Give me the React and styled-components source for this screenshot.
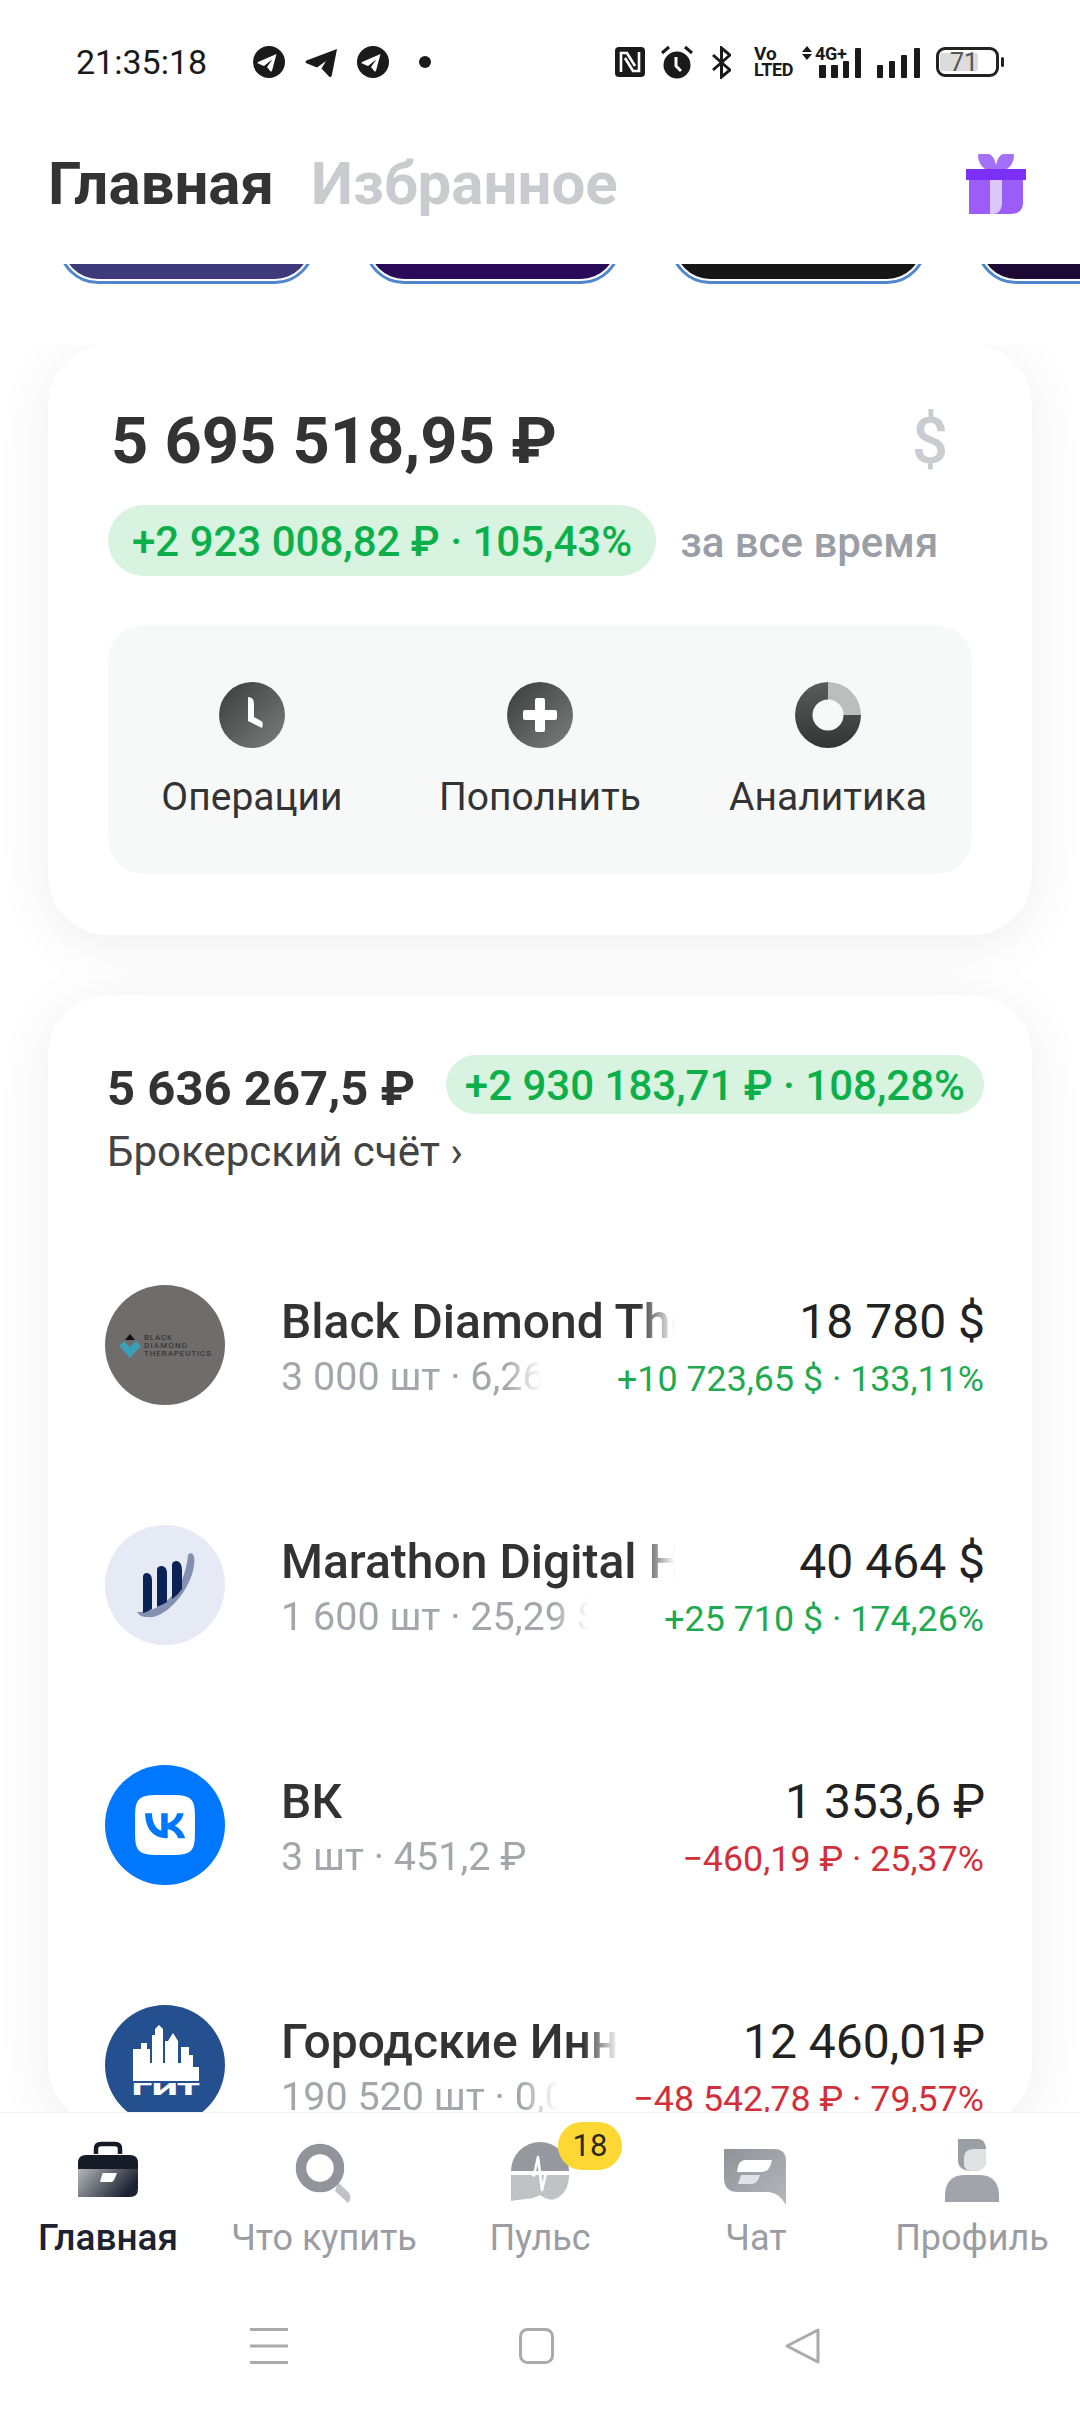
import React from 'react';
import styled, { createGlobalStyle } from 'styled-components';
import { SiVk } from 'react-icons/si';

const Global = createGlobalStyle`
  html, body { margin: 0; padding: 0; background: #fff; }
  body { font-family: Roboto, "Liberation Sans", sans-serif; color: #333; }
  * { box-sizing: border-box; }
`;

const Screen = styled.div`
  width: 1080px;
  height: 2412px;
  display: flex;
  flex-direction: column;
  overflow: hidden;
  background: #fff;
`;

const StatusBar = styled.div`
  height: 124px;
  flex: none;
  display: flex;
  align-items: center;
  padding: 0 77px 0 76px;
  color: #1a1a1a;
`;
const Time = styled.div`
  font-size: 34px;
  width: 130px;
  margin-right: 47px;
  white-space: nowrap;
`;
const NotifIcons = styled.div`
  display: flex;
  align-items: center;
  gap: 20px;
`;
const NotifDot = styled.div`
  width: 12px;
  height: 12px;
  margin-left: 10px;
  border-radius: 50%;
  background: #1a1a1a;
`;
const SysIcons = styled.div`
  margin-left: auto;
  display: flex;
  align-items: center;
  gap: 16px;
`;
const Volte = styled.div`
  width: 39px;
  padding-left: 7px;
  font-weight: 700;
  color: #1a1a1a;
  white-space: nowrap;
`;
const VolteTop = styled.div`
  font-size: 19px;
  line-height: 16px;
`;
const VolteBottom = styled.div`
  font-size: 18px;
  line-height: 16px;
  letter-spacing: -0.4px;
`;
const Net = styled.div`
  position: relative;
  width: 59px;
  height: 32px;
  display: flex;
`;
const NetLabel = styled.div`
  position: absolute;
  left: 13px;
  top: -1px;
  font-size: 18px;
  line-height: 17px;
  font-weight: 700;
  color: #1a1a1a;
  letter-spacing: -0.3px;
  white-space: nowrap;
`;
const Battery = styled.div`
  width: 63px;
  height: 30px;
  border: 3px solid #222;
  border-radius: 9px;
  position: relative;
  padding: 3px 18px 3px 1px;
  margin-right: 4px;
  &::after {
    content: '';
    position: absolute;
    right: -8px;
    top: 7px;
    width: 3px;
    height: 10px;
    background: #222;
    border-radius: 2px;
  }
`;
const BatteryFill = styled.div`
  height: 100%;
  background: #dcdcdc;
  font-size: 25px;
  line-height: 20px;
  color: #555;
  text-align: right;
  border-radius: 2px;
`;

const Header = styled.div`
  height: 140px;
  flex: none;
  padding: 0 54px 21px 48px;
  display: flex;
  align-items: center;
`;
const Tab = styled.div`
  font-size: 60px;
  font-weight: 700;
  margin-right: 37px;
  color: ${p => (p.$active ? '#333' : '#c9cbce')};
`;
const GiftWrap = styled.div`
  margin-left: auto;
  display: flex;
`;

const Strip = styled.div`
  height: 20px;
  flex: none;
  margin-bottom: 61px;
  padding-left: 58px;
  display: flex;
  align-items: flex-end;
  gap: 49px;
  overflow: hidden;
`;
const Promo = styled.div`
  width: 257px;
  height: 90px;
  flex: none;
  border: 3px solid #4f86cd;
  padding: 2px;
  border-radius: 40px;
  background: ${p => p.$color};
  background-clip: content-box;
`;

const Content = styled.div`
  flex: 1;
  min-height: 0;
  overflow: hidden;
  display: flex;
  flex-direction: column;
  gap: 60px;
  padding: 0 48px;
`;
const Card = styled.div`
  flex: none;
  background: #fff;
  border-radius: 60px;
  box-shadow: 0 8px 60px rgba(0, 0, 0, 0.07);
`;
const SummaryCard = styled(Card)`
  padding: 56px 60px 61px;
`;
const TotalRow = styled.div`
  display: flex;
  justify-content: space-between;
  align-items: center;
  height: 80px;
`;
const Total = styled.div`
  font-size: 65px;
  line-height: 80px;
  font-weight: 700;
  padding-left: 3px;
  color: #333;
`;
const CurrencySwitch = styled.div`
  font-size: 64px;
  font-weight: 500;
  color: #c9ccd0;
  margin-right: 24px;
`;
const ProfitRow = styled.div`
  margin-top: 24px;
  display: flex;
  align-items: center;
`;
const Pill = styled.div`
  background: #d8f3e0;
  color: #0cb04a;
  font-size: 42px;
  font-weight: 500;
  height: ${p => p.$h}px;
  line-height: ${p => p.$h + 2}px;
  padding: 0 ${p => p.$pad}px;
  border-radius: 36px;
  white-space: nowrap;
  flex: none;
`;
const Period = styled.div`
  margin: 3px 0 0 24px;
  font-size: 42px;
  font-weight: 500;
  color: #9a9ea6;
  white-space: nowrap;
`;
const Actions = styled.div`
  margin-top: 49px;
  height: 249px;
  background: #f7f9f9;
  border-radius: 36px;
  padding-top: 57px;
  display: grid;
  grid-template-columns: repeat(3, 1fr);
`;
const Action = styled.div`
  display: flex;
  flex-direction: column;
  align-items: center;
`;
const ActionLabel = styled.div`
  margin-top: 24px;
  font-size: 39px;
  line-height: 50px;
  color: #333;
  white-space: nowrap;
`;

const AccountCard = styled(Card)`
  padding: 60px 48px 0 57px;
`;
const AccountHead = styled.div`
  display: flex;
  justify-content: space-between;
  align-items: flex-start;
`;
// the account name runs on under the pill, so this column stays narrower than its text
const AccountInfo = styled.div`
  flex: 0 0 330px;
  min-width: 0;
  padding-top: 4px;
  padding-left: 2px;
`;
const AccountSum = styled.div`
  font-size: 49px;
  line-height: 60px;
  font-weight: 700;
  color: #333;
  white-space: nowrap;
`;
const AccountName = styled.div`
  margin-top: 8px;
  font-size: 42px;
  line-height: 50px;
  color: #444;
  white-space: nowrap;
`;
const Rows = styled.div`
  margin-top: 108px;
  display: flex;
  flex-direction: column;
  gap: 120px;
`;
const Row = styled.div`
  height: 120px;
  display: flex;
  align-items: flex-start;
`;
const Logo = styled.div`
  width: 120px;
  height: 120px;
  flex: none;
  border-radius: 50%;
  background: ${p => p.$bg};
  display: flex;
  align-items: center;
  justify-content: center;
  overflow: hidden;
  margin-right: 56px;
`;
const RowBody = styled.div`
  flex: 1;
  min-width: 0;
  padding-top: 7px;
`;
const Line = styled.div`
  display: flex;
  justify-content: space-between;
  white-space: nowrap;
`;
// left text fades out before it reaches the right column
const Fade = styled.div`
  flex: 1;
  min-width: 0;
  overflow: hidden;
  margin-right: ${p => p.$gap}px;
  -webkit-mask-image: linear-gradient(to right, #000 calc(100% - 36px), transparent);
  mask-image: linear-gradient(to right, #000 calc(100% - 36px), transparent);
`;
const Name = styled(Fade)`
  font-size: 48px;
  line-height: 60px;
  font-weight: 500;
  color: #333;
`;
const Sub = styled(Fade)`
  font-size: 39.5px;
  line-height: 50px;
  color: #a3a6ab;
`;
const Value = styled.div`
  flex: none;
  font-size: 48px;
  line-height: 60px;
  color: #222;
  margin-right: -1px;
`;
const Change = styled.div`
  flex: none;
  font-size: 35.8px;
  line-height: 54px;
  color: ${p => (p.$down ? '#d32f3a' : '#1eaa50')};
`;

const BottomNav = styled.div`
  height: 300px;
  flex: none;
  position: relative;
  background: #fff;
  border-top: 1px solid #f0f0f0;
  padding-top: 23px;
`;
const Tabs = styled.div`
  display: grid;
  grid-template-columns: repeat(5, 216px);
`;
const NavItem = styled.div`
  position: relative;
  display: flex;
  flex-direction: column;
  align-items: center;
`;
const NavIcon = styled.div`
  width: 70px;
  height: 70px;
  display: flex;
`;
const NavLabel = styled.div`
  margin-top: 10px;
  font-size: ${p => (p.$active ? 37 : 36)}px;
  line-height: 44px;
  font-weight: ${p => (p.$active ? 500 : 400)};
  color: ${p => (p.$active ? '#1b2230' : '#9a9da3')};
  white-space: nowrap;
`;
const Badge = styled.div`
  position: absolute;
  left: 126px;
  top: -14px;
  width: 64px;
  height: 48px;
  border-radius: 24px;
  background: #fdd835;
  color: #2b2a12;
  font-size: 31px;
  line-height: 48px;
  text-align: center;
`;
const Gestures = styled.div`
  margin-top: 68px;
  padding-left: 250px;
  display: flex;
  gap: 231px;
`;

const TgCircle = () => (
  <svg width="32" height="32" viewBox="0 0 32 32">
    <circle cx="16" cy="16" r="16" fill="#1a1a1a" />
    <path fill="#fff" d="M23.5 8 L5 16 Q4 16.8 5 17.4 L11 20 L19.5 13.2 L14 21 L17.6 25.4 Q18.6 25.9 19 24.8 Z" />
  </svg>
);

const TgPlane = () => (
  <svg width="32" height="32" viewBox="0 0 32 32">
    <path fill="#1a1a1a" d="M32 3 L1.5 14.5 Q-.5 16 1.5 17.2 L12 21.5 L21 15 L16.5 22.6 L24.5 31 Q26.3 31.5 26.8 29.5 Z" />
  </svg>
);

const NfcIcon = () => (
  <svg width="30" height="30" viewBox="0 0 30 30">
    <rect width="30" height="30" rx="4" fill="#1a1a1a" />
    <path d="M6 25 V6 L12 6 L20 19 M24 5 V24 L18 24 L10 11" fill="none" stroke="#fff" strokeWidth="2.6" />
  </svg>
);

const AlarmIcon = () => (
  <svg width="32" height="34" viewBox="0 0 32 34">
    <circle cx="16" cy="20" r="13.5" fill="#1a1a1a" />
    <path d="M1 8 L8 2 M31 8 L24 2" stroke="#1a1a1a" strokeWidth="3" />
    <path d="M15 12 V21 L20 26" fill="none" stroke="#fff" strokeWidth="3" />
  </svg>
);

const BtIcon = () => (
  <svg width="22" height="33" viewBox="-3 0 22 33">
    <path d="M1 9 L18 24 L9.5 31 V2 L18 9 L1 24" fill="none" stroke="#1a1a1a" strokeWidth="3" />
  </svg>
);

const NetBars = () => (
  <svg width="59" height="32" viewBox="0 0 59 32">
    <path d="M0 6 L5 0 L10 6 Z M0 8 L10 8 L5 14 Z" fill="#1a1a1a" />
    <rect x="17" y="19" width="7" height="13" rx="1" fill="#1a1a1a" />
    <rect x="29" y="19" width="7" height="13" rx="1" fill="#1a1a1a" />
    <rect x="41" y="15" width="6" height="17" rx="1" fill="#1a1a1a" />
    <rect x="53" y="2" width="6" height="30" rx="1" fill="#1a1a1a" />
  </svg>
);

const SignalIcon = () => (
  <svg width="43" height="32" viewBox="0 0 43 32">
    <rect x="0" y="19" width="6" height="13" rx="1" fill="#1a1a1a" />
    <rect x="12" y="15" width="6" height="17" rx="1" fill="#1a1a1a" />
    <rect x="24" y="9" width="6" height="23" rx="1" fill="#1a1a1a" />
    <rect x="37" y="2" width="6" height="30" rx="1" fill="#1a1a1a" />
  </svg>
);

const GiftIcon = () => (
  <svg width="60" height="62" viewBox="0 0 60 62">
    <path d="M12 2 Q12 1 13 1 H22 C27 1 29 8 30 12 C31 8 33 1 38 1 H47 Q48 1 48 2 C48 9 44 17 36 17 H24 C16 17 12 9 12 2 Z" fill="#a470f8" />
    <path d="M3 27 H57 V50 C57 57 52 61 45 61 H3 Z" fill="#9b5cf8" />
    <path d="M24 27 H36 V50 C36 56 33 60 28 61 H24 Z" fill="#dcc7fb" />
    <rect x="0" y="16" width="60" height="11" fill="#7c2ff7" />
  </svg>
);

const ClockIcon = () => (
  <svg width="66" height="66" viewBox="0 0 66 66">
    <defs>
      <linearGradient id="dark" x1="0" y1="0" x2="1" y2="1">
        <stop offset="0" stopColor="#3a3c3c" />
        <stop offset="1" stopColor="#7c7e7e" />
      </linearGradient>
    </defs>
    <circle cx="33" cy="33" r="33" fill="url(#dark)" />
    <path d="M29 15 Q35 15 35 22 V35 L43 39.5 Q44.5 42 43 46 L29 39 Z" fill="#fff" />
  </svg>
);

const PlusIcon = () => (
  <svg width="66" height="66" viewBox="0 0 66 66">
    <circle cx="33" cy="33" r="33" fill="url(#dark)" />
    <path d="M28 18 Q28 16 30 16 H36 Q38 16 38 18 V28 H48 Q50 28 50 30 V36 Q50 38 48 38 H38 V48 Q38 50 36 50 H30 Q28 50 28 48 V38 H18 Q16 38 16 36 V30 Q16 28 18 28 H28 Z" fill="#fff" />
  </svg>
);

const DonutIcon = () => (
  <svg width="66" height="66" viewBox="0 0 66 66">
    <defs>
      <linearGradient id="donut" x1="0" y1="0" x2="0" y2="1">
        <stop offset="0" stopColor="#5a5c5c" />
        <stop offset="1" stopColor="#333535" />
      </linearGradient>
    </defs>
    <path d="M33 0 A33 33 0 1 0 66 33 H33 Z" fill="url(#donut)" />
    <path d="M33 0 A33 33 0 0 1 66 33 H33 Z" fill="#bcbebe" />
    <circle cx="33" cy="33" r="15.5" fill="#f7f9f9" />
  </svg>
);

const BlackDiamondLogo = () => (
  <svg width="120" height="120" viewBox="0 0 120 120">
    <path d="M25 49 L30 55 H20 Z" fill="#111" />
    <path d="M14 61 L19 56 L25 62 L31 56 L36 61 L25 73 Z" fill="#3aa0b8" />
    <g fontFamily="Roboto" fontSize="8" fill="#2b2b2b">
      <text x="39" y="55" textLength="28">BLACK</text>
      <text x="39" y="63" textLength="43">DIAMOND</text>
      <text x="39" y="71" textLength="67">THERAPEUTICS</text>
    </g>
  </svg>
);

const MarathonLogo = () => (
  <svg width="120" height="120" viewBox="0 0 120 120">
    <path d="M32 87 C56 88 80 66 83 30 C86 26 91 28 89 41 C85 66 60 95 42 92 C37 92 34 90 32 87 Z" fill="#8390b0" />
    <path d="M38 52 Q38 48 42 48 Q47 49 47 55 V84 Q42 87 38 88 Z" fill="#0b2257" />
    <path d="M52 45 Q52 41 57 41 Q62 42 62 48 V77 Q57 80 52 82 Z" fill="#0b2257" />
    <path d="M67 40 Q67 36 72 36 Q77 37 77 46 V64 Q73 70 67 74 Z" fill="#0b2257" />
  </svg>
);

const GitLogo = () => (
  <svg width="120" height="120" viewBox="0 0 120 120">
    <path fill="#fff" d="M28 76 V44 H36 V38 H42 V44 H45 V58 H47 V30 H50 V24 L54 20 L58 24 V58 H60 V36 H63 L68 28 L73 36 V58 H76 V42 H84 V50 H88 V62 H94 V76 Z" />
    <text x="27" y="90" fontFamily="Roboto" fontWeight="900" fontSize="17" fill="#fff" textLength="68" lengthAdjust="spacingAndGlyphs">ГИТ</text>
  </svg>
);

const BriefcaseIcon = () => (
  <svg width="70" height="70" viewBox="0 0 70 70">
    <defs>
      <linearGradient id="case" x1="0" y1="0" x2="1" y2="0.4">
        <stop offset="0" stopColor="#b4b6ba" />
        <stop offset="1" stopColor="#1b2230" />
      </linearGradient>
    </defs>
    <path d="M23 18 V13 Q23 8 28 8 H42 Q47 8 47 13 V18" fill="none" stroke="#151c28" strokeWidth="4.5" />
    <path d="M65 33 H5 V27 Q5 19 13 19 H57 Q65 19 65 27 Z" fill="#151c28" />
    <path d="M5 33 H65 V53 Q65 61 57 61 H5 Z" fill="url(#case)" />
    <path d="M30 37 H44 L41 44 Q40 46 38 46 H27 L29 39 Q29.5 37 30 37 Z" fill="#fff" />
  </svg>
);

const SearchIcon = () => (
  <svg width="70" height="70" viewBox="0 0 70 70">
    <path d="M46 55 L49 46 L60 57 Q63 62 59 67 Z" fill="#bfc2c6" />
    <circle cx="31" cy="32" r="19" fill="#fff" stroke="#91959b" strokeWidth="10.5" />
  </svg>
);

const PulseIcon = () => (
  <svg width="70" height="70" viewBox="0 0 70 70">
    <path d="M6 35 A29 29 0 0 1 64 35 Z" fill="#95989f" />
    <path d="M6 39 H64 C64 52 58 60 50 63 C45 65 39 62 35 59 C30 63 18 63 6 65 Z" fill="#c0c3c6" />
    <path d="M6 37 H26 L29 39.5 L33 21 L37 54 L41 37 H64" fill="none" stroke="#fff" strokeWidth="2.6" strokeLinejoin="round" />
  </svg>
);

const ChatIcon = () => (
  <svg width="70" height="70" viewBox="0 0 70 70">
    <defs>
      <linearGradient id="chat" x1="0" y1="0" x2="1" y2="1">
        <stop offset="0" stopColor="#8f9399" />
        <stop offset="1" stopColor="#b4b7bb" />
      </linearGradient>
    </defs>
    <path d="M3 13 H53 Q65 13 65 25 V69 Q58 57 48 56 H17 Q3 56 3 42 Z" fill="url(#chat)" />
    <path d="M23 24 H51 Q49 36 41 36 H16 Q17 25 23 24 Z" fill="#fff" />
    <path d="M20 39 H39 Q37 48 30 48 H17 Z" fill="#e0e3e5" />
  </svg>
);

const ProfileIcon = () => (
  <svg width="70" height="70" viewBox="0 0 70 70">
    <path d="M21 3 H42 Q49 4 49 14 V24 Q49 35 35 35 Q21 35 21 24 Z" fill="#9a9ea5" />
    <path d="M27 22 Q27 13 37 13 H49 V24 Q49 35 35 35 Q27 35 27 28 Z" fill="#dfe1e3" />
    <path d="M8 66 V60 Q8 39 28 39 H42 Q62 39 62 60 V66 Z" fill="#a1a5ab" />
  </svg>
);

const Hamburger = () => (
  <svg width="38" height="36" viewBox="0 0 38 36">
    <path d="M0 1.5 H38 M0 18 H38 M0 34.5 H38" stroke="#aaa" strokeWidth="3" />
  </svg>
);
const HomeKey = () => (
  <svg width="35" height="36" viewBox="0 0 35 36">
    <rect x="1.5" y="1.5" width="32" height="33" rx="7" fill="none" stroke="#aaa" strokeWidth="3" />
  </svg>
);
const BackKey = () => (
  <svg width="35" height="36" viewBox="0 0 35 36">
    <path d="M33 2 V34 L2 18 Z" fill="none" stroke="#aaa" strokeWidth="3" strokeLinejoin="round" />
  </svg>
);

const promos = ['#3f3a7a', '#2a0b5a', '#161616', '#1e0b35'];

const positions = [
  { name: 'Black Diamond Therapeutics', sub: '3 000 шт · 6,26 $', value: '18 780 $', change: '+10 723,65 $ · 133,11%', bg: '#6f6c6b', logo: <BlackDiamondLogo /> },
  { name: 'Marathon Digital Holdings', sub: '1 600 шт · 25,29 $', value: '40 464 $', change: '+25 710 $ · 174,26%', bg: '#e6eaf5', logo: <MarathonLogo /> },
  { name: 'ВК', sub: '3 шт · 451,2 ₽', value: '1 353,6 ₽', change: '−460,19 ₽ · 25,37%', down: true, bg: '#0077ff', logo: <SiVk size={60} color="#fff" /> },
  { name: 'Городские Инновационные', sub: '190 520 шт · 0,09 ₽', value: '12 460,01₽', change: '−48 542,78 ₽ · 79,57%', down: true, bg: '#24508f', logo: <GitLogo /> },
];

const tabs = [
  { label: 'Главная', icon: <BriefcaseIcon />, active: true },
  { label: 'Что купить', icon: <SearchIcon /> },
  { label: 'Пульс', icon: <PulseIcon />, badge: '18' },
  { label: 'Чат', icon: <ChatIcon /> },
  { label: 'Профиль', icon: <ProfileIcon /> },
];

export default function App() {
  return (
    <Screen>
      <Global />
      <StatusBar>
        <Time>21:35:18</Time>
        <NotifIcons>
          <TgCircle />
          <TgPlane />
          <TgCircle />
          <NotifDot />
        </NotifIcons>
        <SysIcons>
          <NfcIcon />
          <AlarmIcon />
          <BtIcon />
          <Volte>
            <VolteTop>Vo</VolteTop>
            <VolteBottom>LTED</VolteBottom>
          </Volte>
          <Net>
            <NetBars />
            <NetLabel>4G+</NetLabel>
          </Net>
          <SignalIcon />
          <Battery>
            <BatteryFill>71</BatteryFill>
          </Battery>
        </SysIcons>
      </StatusBar>

      <Header>
        <Tab $active>Главная</Tab>
        <Tab>Избранное</Tab>
        <GiftWrap><GiftIcon /></GiftWrap>
      </Header>

      <Strip>
        {promos.map(color => <Promo key={color} $color={color} />)}
      </Strip>

      <Content>
        <SummaryCard>
          <TotalRow>
            <Total>5 695 518,95 ₽</Total>
            <CurrencySwitch>$</CurrencySwitch>
          </TotalRow>
          <ProfitRow>
            <Pill $h={71} $pad={24}>+2 923 008,82 ₽ · 105,43%</Pill>
            <Period>за все время</Period>
          </ProfitRow>
          <Actions>
            <Action><ClockIcon /><ActionLabel>Операции</ActionLabel></Action>
            <Action><PlusIcon /><ActionLabel>Пополнить</ActionLabel></Action>
            <Action><DonutIcon /><ActionLabel>Аналитика</ActionLabel></Action>
          </Actions>
        </SummaryCard>

        <AccountCard>
          <AccountHead>
            <AccountInfo>
              <AccountSum>5 636 267,5 ₽</AccountSum>
              <AccountName>Брокерский счёт ›</AccountName>
            </AccountInfo>
            <Pill $h={59} $pad={19}>+2 930 183,71 ₽ · 108,28%</Pill>
          </AccountHead>
          <Rows>
            {positions.map(p => (
              <Row key={p.name}>
                <Logo $bg={p.bg}>{p.logo}</Logo>
                <RowBody>
                  <Line>
                    <Name $gap={124}>{p.name}</Name>
                    <Value>{p.value}</Value>
                  </Line>
                  <Line>
                    <Sub $gap={75}>{p.sub}</Sub>
                    <Change $down={p.down}>{p.change}</Change>
                  </Line>
                </RowBody>
              </Row>
            ))}
          </Rows>
        </AccountCard>
      </Content>

      <BottomNav>
        <Tabs>
          {tabs.map(t => (
            <NavItem key={t.label}>
              <NavIcon>{t.icon}</NavIcon>
              <NavLabel $active={t.active}>{t.label}</NavLabel>
              {t.badge && <Badge>{t.badge}</Badge>}
            </NavItem>
          ))}
        </Tabs>
        <Gestures>
          <Hamburger />
          <HomeKey />
          <BackKey />
        </Gestures>
      </BottomNav>
    </Screen>
  );
}
